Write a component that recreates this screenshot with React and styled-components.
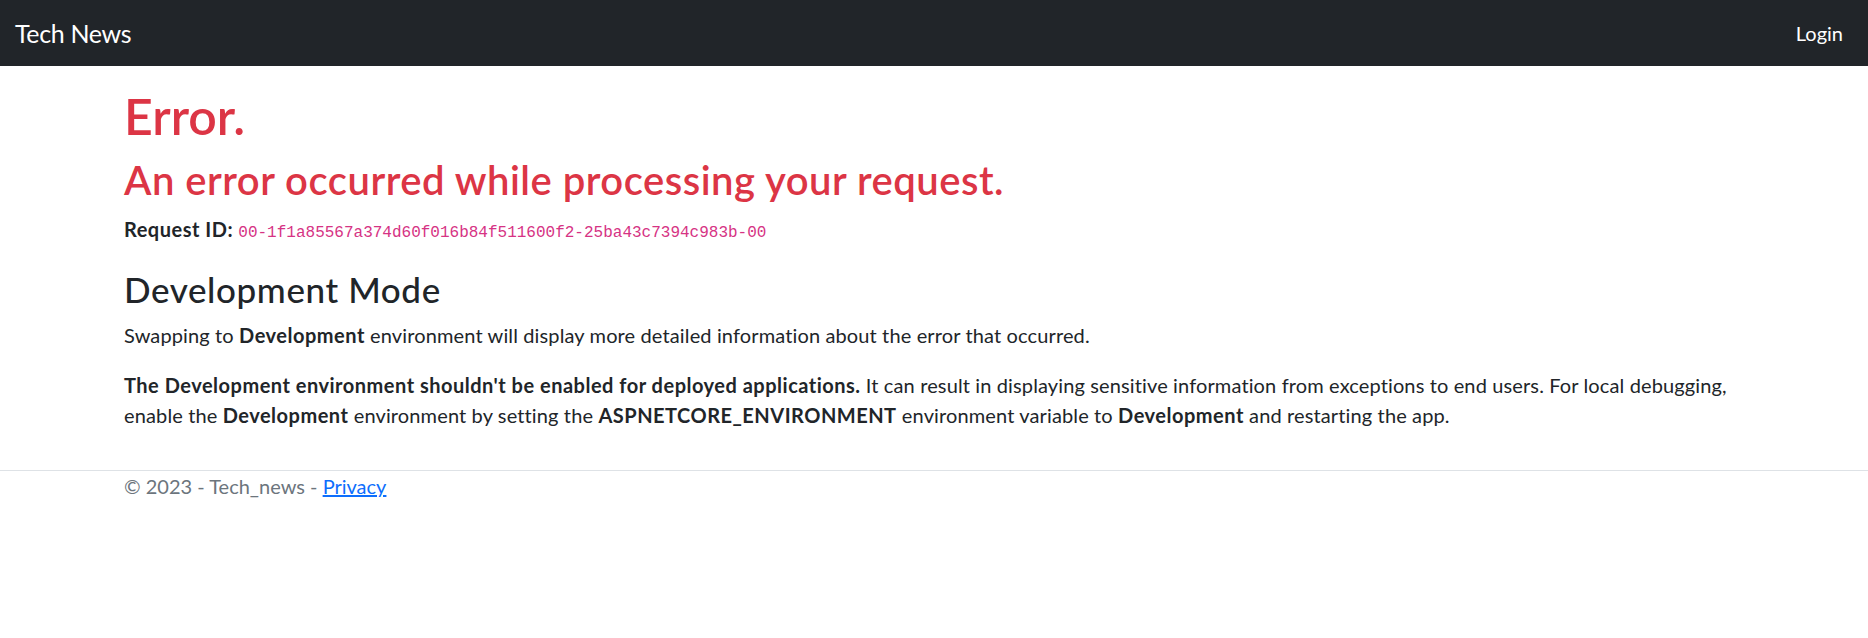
import React from 'react';
import styled, { createGlobalStyle } from 'styled-components';

const GlobalStyle = createGlobalStyle`
    *, *::before, *::after {
        box-sizing: border-box;
    }
    body {
        margin: 0;
        background: #ffffff;
        color: #212529;
        font-family: Lato, "Open Sans", sans-serif;
        font-size: 20px;
        line-height: 30px;
    }
`;

const Navbar = styled.nav`
    display: flex;
    align-items: center;
    justify-content: space-between;
    height: 66px;
    padding: 0 15px;
    background: #212529;
`;

const Brand = styled.a`
    color: #ffffff;
    font-size: 25px;
    line-height: 37px;
    letter-spacing: -0.35px;
    text-decoration: none;
`;

const NavLink = styled.a`
    padding: 0 10px;
    color: #ffffff;
    font-size: 20px;
    line-height: 30px;
    text-decoration: none;
`;

const Container = styled.div`
    width: 1650px;
    max-width: 100%;
    margin: 0 auto;
    padding: 0 15px;
`;

const Main = styled.main`
    padding: 20px 0 20px;
`;

const Title = styled.h1`
    margin: 0 0 10px;
    color: #dc3545;
    font-size: 50px;
    font-weight: 600;
    line-height: 60px;
`;

const Subtitle = styled.h2`
    margin: 0 0 10px;
    color: #dc3545;
    font-size: 40px;
    font-weight: 600;
    line-height: 48px;
    letter-spacing: 0.5px;
`;

const SectionTitle = styled.h3`
    margin: 0 0 10px;
    font-size: 35px;
    font-weight: 500;
    line-height: 42px;
    letter-spacing: 0.6px;
`;

const Text = styled.p`
    margin: 0 0 20px;
    letter-spacing: 0.13px;
    strong {
        font-weight: 700;
        letter-spacing: 0.5px;
    }
`;

const Code = styled.code`
    color: #d63384;
    font-family: "Liberation Mono", "DejaVu Sans Mono", monospace;
    font-size: 16px;
    letter-spacing: 0;
`;

const Footer = styled.footer`
    border-top: 1px solid #dee2e6;
    color: #6c757d;
    line-height: 30px;
    white-space: nowrap;
    a {
        color: #0d6efd;
    }
`;

export default function App() {
    const requestId = '00-1f1a85567a374d60f016b84f511600f2-25ba43c7394c983b-00';

    return (
        <>
            <GlobalStyle />
            <header>
                <Navbar>
                    <Brand href="#">Tech News</Brand>
                    <NavLink href="#">Login</NavLink>
                </Navbar>
            </header>
            <Container>
                <Main>
                    <Title>Error.</Title>
                    <Subtitle>An error occurred while processing your request.</Subtitle>
                    <Text>
                        <strong>Request ID:</strong> <Code>{requestId}</Code>
                    </Text>
                    <SectionTitle>Development Mode</SectionTitle>
                    <Text>
                        Swapping to <strong>Development</strong> environment will display more detailed information about the error that occurred.
                    </Text>
                    <Text>
                        <strong>The Development environment shouldn't be enabled for deployed applications.</strong> It can result in displaying sensitive information from exceptions to end users. For local debugging, enable the <strong>Development</strong> environment by setting the <strong>ASPNETCORE_ENVIRONMENT</strong> environment variable to <strong>Development</strong> and restarting the app.
                    </Text>
                </Main>
            </Container>
            <Footer>
                <Container>
                    &copy; 2023 - Tech_news - <a href="#">Privacy</a>
                </Container>
            </Footer>
        </>
    );
}
